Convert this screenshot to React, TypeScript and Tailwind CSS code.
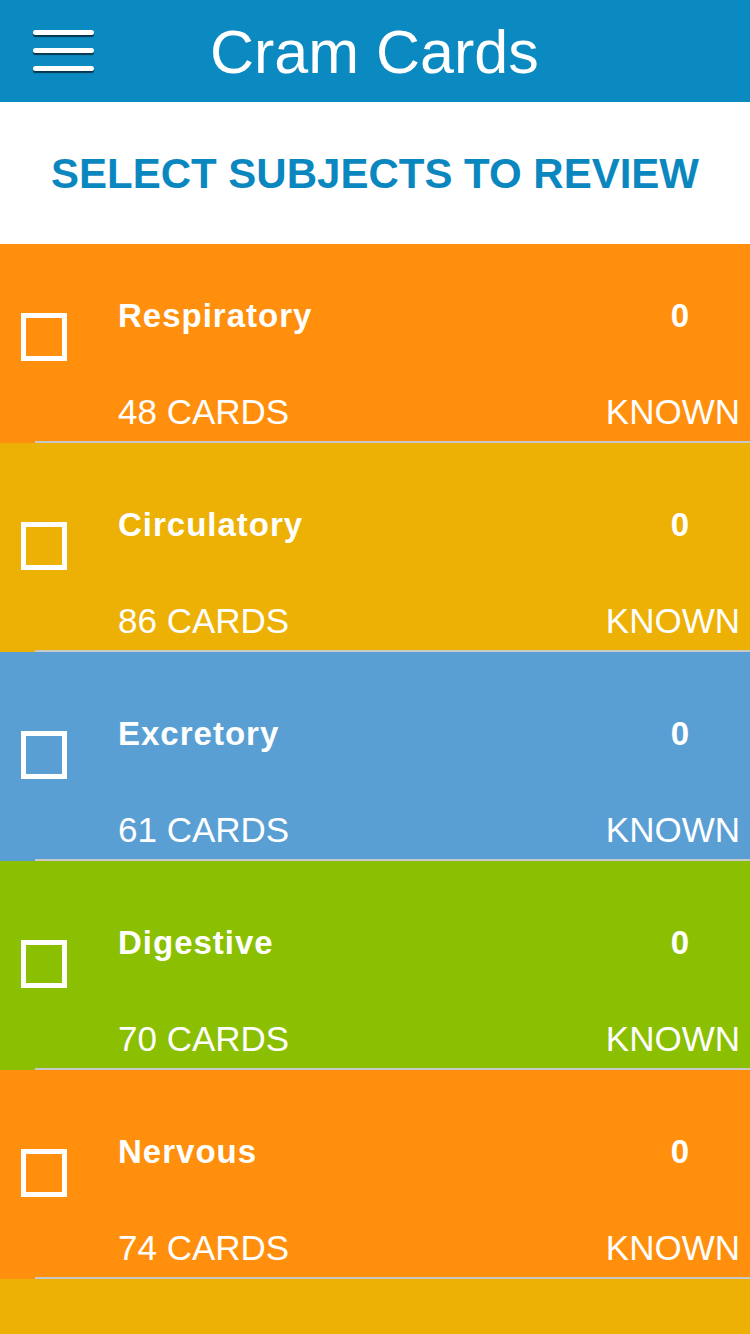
import React from 'react'

// Subject rows shown in the list
interface Subject {
  name: string
  cards: number
  known: number
  color: string
}

const subjects: Subject[] = [
  { name: 'Respiratory', cards: 48, known: 0, color: 'bg-[#ff8f0c]' },
  { name: 'Circulatory', cards: 86, known: 0, color: 'bg-[#edb105]' },
  { name: 'Excretory', cards: 61, known: 0, color: 'bg-[#5a9fd4]' },
  { name: 'Digestive', cards: 70, known: 0, color: 'bg-[#8bc002]' },
  { name: 'Nervous', cards: 74, known: 0, color: 'bg-[#ff8f0c]' },
]

function SubjectRow({ subject }: { subject: Subject }) {
  return (
    <div className={`${subject.color} h-[209px] flex flex-col`}>
      <div className="flex flex-1">
        {/* checkbox */}
        <div className="w-[118px] flex-shrink-0 flex items-center">
          <div className="ml-[21px] mt-[-2px] w-[46px] h-[48px] border-[5px] border-white" />
        </div>

        {/* title + counts */}
        <div className="flex-1 text-white">
          <div className="pt-[65px] flex justify-between items-start">
            <span className="text-[33px] leading-none font-bold tracking-[1px] h-[33px]">{subject.name}</span>
            <span className="w-[40px] mr-[50px] text-center text-[33px] leading-none font-bold">{subject.known}</span>
          </div>
          <div className="mt-[62px] flex justify-between pr-[10px] text-[35px] leading-none">
            <span>{subject.cards} CARDS</span>
            <span>KNOWN</span>
          </div>
        </div>
      </div>

      {/* separator */}
      <div className="flex h-[2px]">
        <div className="w-[35px]" />
        <div className="flex-1 bg-[#c8c8c8]" />
      </div>
    </div>
  )
}

export default function App() {
  return (
    <div className="w-[750px] h-[1334px] overflow-hidden bg-white font-['Liberation_Sans',Arial,sans-serif] flex flex-col">
      {/* HEADER */}
      <div className="h-[102px] flex-shrink-0 bg-[#0b89c1] flex items-start">
        <div className="ml-[33px] mt-[30px] w-[61px] flex flex-col gap-[13px]">
          <div className="h-[5px] rounded-full bg-white shadow-[0_2px_1px_rgba(0,0,0,0.6)]" />
          <div className="h-[5px] rounded-full bg-white shadow-[0_2px_1px_rgba(0,0,0,0.6)]" />
          <div className="h-[5px] rounded-full bg-white shadow-[0_2px_1px_rgba(0,0,0,0.6)]" />
        </div>
        <h1 className="ml-[116px] mt-[22px] text-white text-[61px] leading-none">Cram Cards</h1>
      </div>

      {/* SUBTITLE */}
      <div className="h-[142px] flex-shrink-0 flex items-center justify-center">
        <h2 className="text-[#0b87c0] text-[42px] font-bold leading-none mt-[2px]">SELECT SUBJECTS TO REVIEW</h2>
      </div>

      {/* LIST (scrolled a little) */}
      <div className="flex-1 overflow-hidden flex flex-col">
        <div className="-mt-[10px]">
          {subjects.map((s) => (
            <SubjectRow key={s.name} subject={s} />
          ))}
        </div>
        {/* next row, only its top edge is on screen */}
        <div className="flex-1 bg-[#edb105]" />
      </div>
    </div>
  )
}
